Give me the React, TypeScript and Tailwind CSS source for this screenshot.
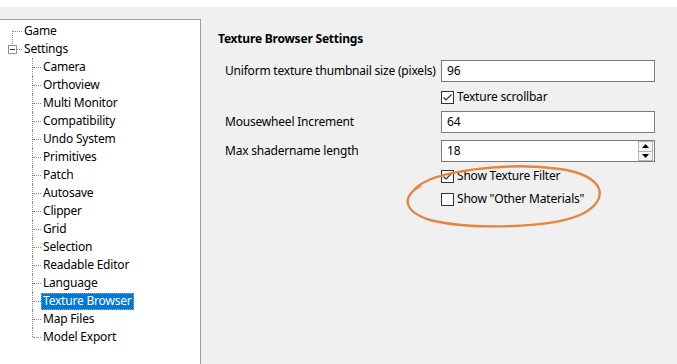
const treeChildren = [
  'Camera',
  'Orthoview',
  'Multi Monitor',
  'Compatibility',
  'Undo System',
  'Primitives',
  'Patch',
  'Autosave',
  'Clipper',
  'Grid',
  'Selection',
  'Readable Editor',
  'Language',
  'Texture Browser',
  'Map Files',
  'Model Export',
]

const font = { fontFamily: '"Noto Sans", "Liberation Sans", sans-serif' }

function Check({ checked }: { checked: boolean }) {
  return (
    <div className="w-[13px] h-[13px] border border-[#333] bg-white flex items-center justify-center shrink-0">
      {checked && (
        <svg width="11" height="11" viewBox="0 0 11 11">
          <path d="M1.5 5.5 L4 8 L9.5 2.5" fill="none" stroke="#333" strokeWidth="1.2" />
        </svg>
      )}
    </div>
  )
}

function CheckRow({ checked, label, className }: { checked: boolean; label: string; className?: string }) {
  return (
    <div className={'flex items-center h-[16px] pl-[223px] gap-[3px] ' + (className ?? '')}>
      <Check checked={checked} />
      <span>{label}</span>
    </div>
  )
}

function Field({ label, value, spin, className }: { label: string; value: string; spin?: boolean; className?: string }) {
  return (
    <div className={'flex items-center ' + (className ?? '')}>
      <div className="w-[223px] pl-[7px] whitespace-nowrap">{label}</div>
      <div className="w-[214px] h-[22px] border border-[#7a7a7a] bg-white flex items-center">
        <span className="flex-1 pl-[5px]">{value}</span>
        {spin && (
          <div className="flex flex-col w-[16px] h-[20px] pr-[1px]">
            <div className="flex-1 border border-[#b5b5b5] bg-[#f5f5f5] flex items-center justify-center">
              <svg width="7" height="4" viewBox="0 0 7 4"><path d="M0 4 L3.5 0 L7 4 Z" fill="#000" /></svg>
            </div>
            <div className="flex-1 border border-t-0 border-[#b5b5b5] bg-[#f5f5f5] flex items-center justify-center">
              <svg width="7" height="4" viewBox="0 0 7 4"><path d="M0 0 L3.5 4 L7 0 Z" fill="#000" /></svg>
            </div>
          </div>
        )}
      </div>
    </div>
  )
}

export default function App() {
  return (
    <div className="relative w-[677px] h-[364px] overflow-hidden text-[12px] tracking-[-0.2px] text-black bg-white" style={font}>
      <div className="h-[7px] bg-white" />
      <div className="h-[357px] bg-[#f0f0f0] pt-[12px] flex">
        {/* tree */}
        <div className="w-[201px] bg-white border-t border-r border-[#a0a0a0] pt-[2px]">
          <div className="relative h-[18px] flex items-center">
            <div className="absolute left-[12px] top-[9px] h-[15px] border-l border-dotted border-[#8a8a8a]" />
            <div className="ml-[13px] w-[9px] border-t border-dotted border-[#8a8a8a]" />
            <span className="ml-[2px]">Game</span>
          </div>
          <div className="relative h-[18px] flex items-center">
            <div className="ml-[8px] w-[9px] h-[9px] border border-[#919191] bg-white flex items-center justify-center z-10">
              <div className="w-[5px] h-px bg-[#333]" />
            </div>
            <div className="w-[5px] border-t border-dotted border-[#8a8a8a]" />
            <span className="ml-[2px]">Settings</span>
          </div>
          <div className="ml-[32px]">
            {treeChildren.map((name, i) => (
              <div key={name} className="relative h-[18px] flex items-center">
                <div
                  className={
                    'absolute left-0 top-0 border-l border-dotted border-[#8a8a8a] ' +
                    (i === treeChildren.length - 1 ? 'h-[9px]' : 'h-[18px]')
                  }
                />
                <div className="ml-px w-[8px] border-t border-dotted border-[#8a8a8a]" />
                {name === 'Texture Browser' ? (
                  <span className="ml-0 px-[2px] h-[17px] flex items-center bg-[#0078d7] text-white outline outline-1 outline-dotted outline-[#e0a040] -outline-offset-1">
                    {name}
                  </span>
                ) : (
                  <span className="ml-[2px]">{name}</span>
                )}
              </div>
            ))}
          </div>
        </div>

        {/* settings */}
        <div className="flex-1 pl-[17px] pt-[12px]">
          <div className="font-bold h-[16px] leading-[16px]">Texture Browser Settings</div>
          <Field className="mt-[13px]" label="Uniform texture thumbnail size (pixels)" value="96" />
          <CheckRow className="mt-[7px]" checked label="Texture scrollbar" />
          <Field className="mt-[6px]" label="Mousewheel Increment" value="64" />
          <Field className="mt-[7px]" label="Max shadername length" value="18" spin />
          <CheckRow className="mt-[6px]" checked label="Show Texture Filter" />
          <CheckRow className="mt-[7px]" checked={false} label={'Show "Other Materials"'} />
        </div>
      </div>

      <svg className="absolute left-[400px] top-[160px]" width="210" height="75" viewBox="0 0 210 75">
        <path
          d="M14 30 C 30 10, 110 2, 160 9 C 205 15, 212 40, 180 55 C 150 68, 70 70, 30 60 C 5 52, 0 38, 20 26"
          fill="none"
          stroke="#e5853f"
          strokeWidth="2.4"
          strokeLinecap="round"
        />
      </svg>
    </div>
  )
}
